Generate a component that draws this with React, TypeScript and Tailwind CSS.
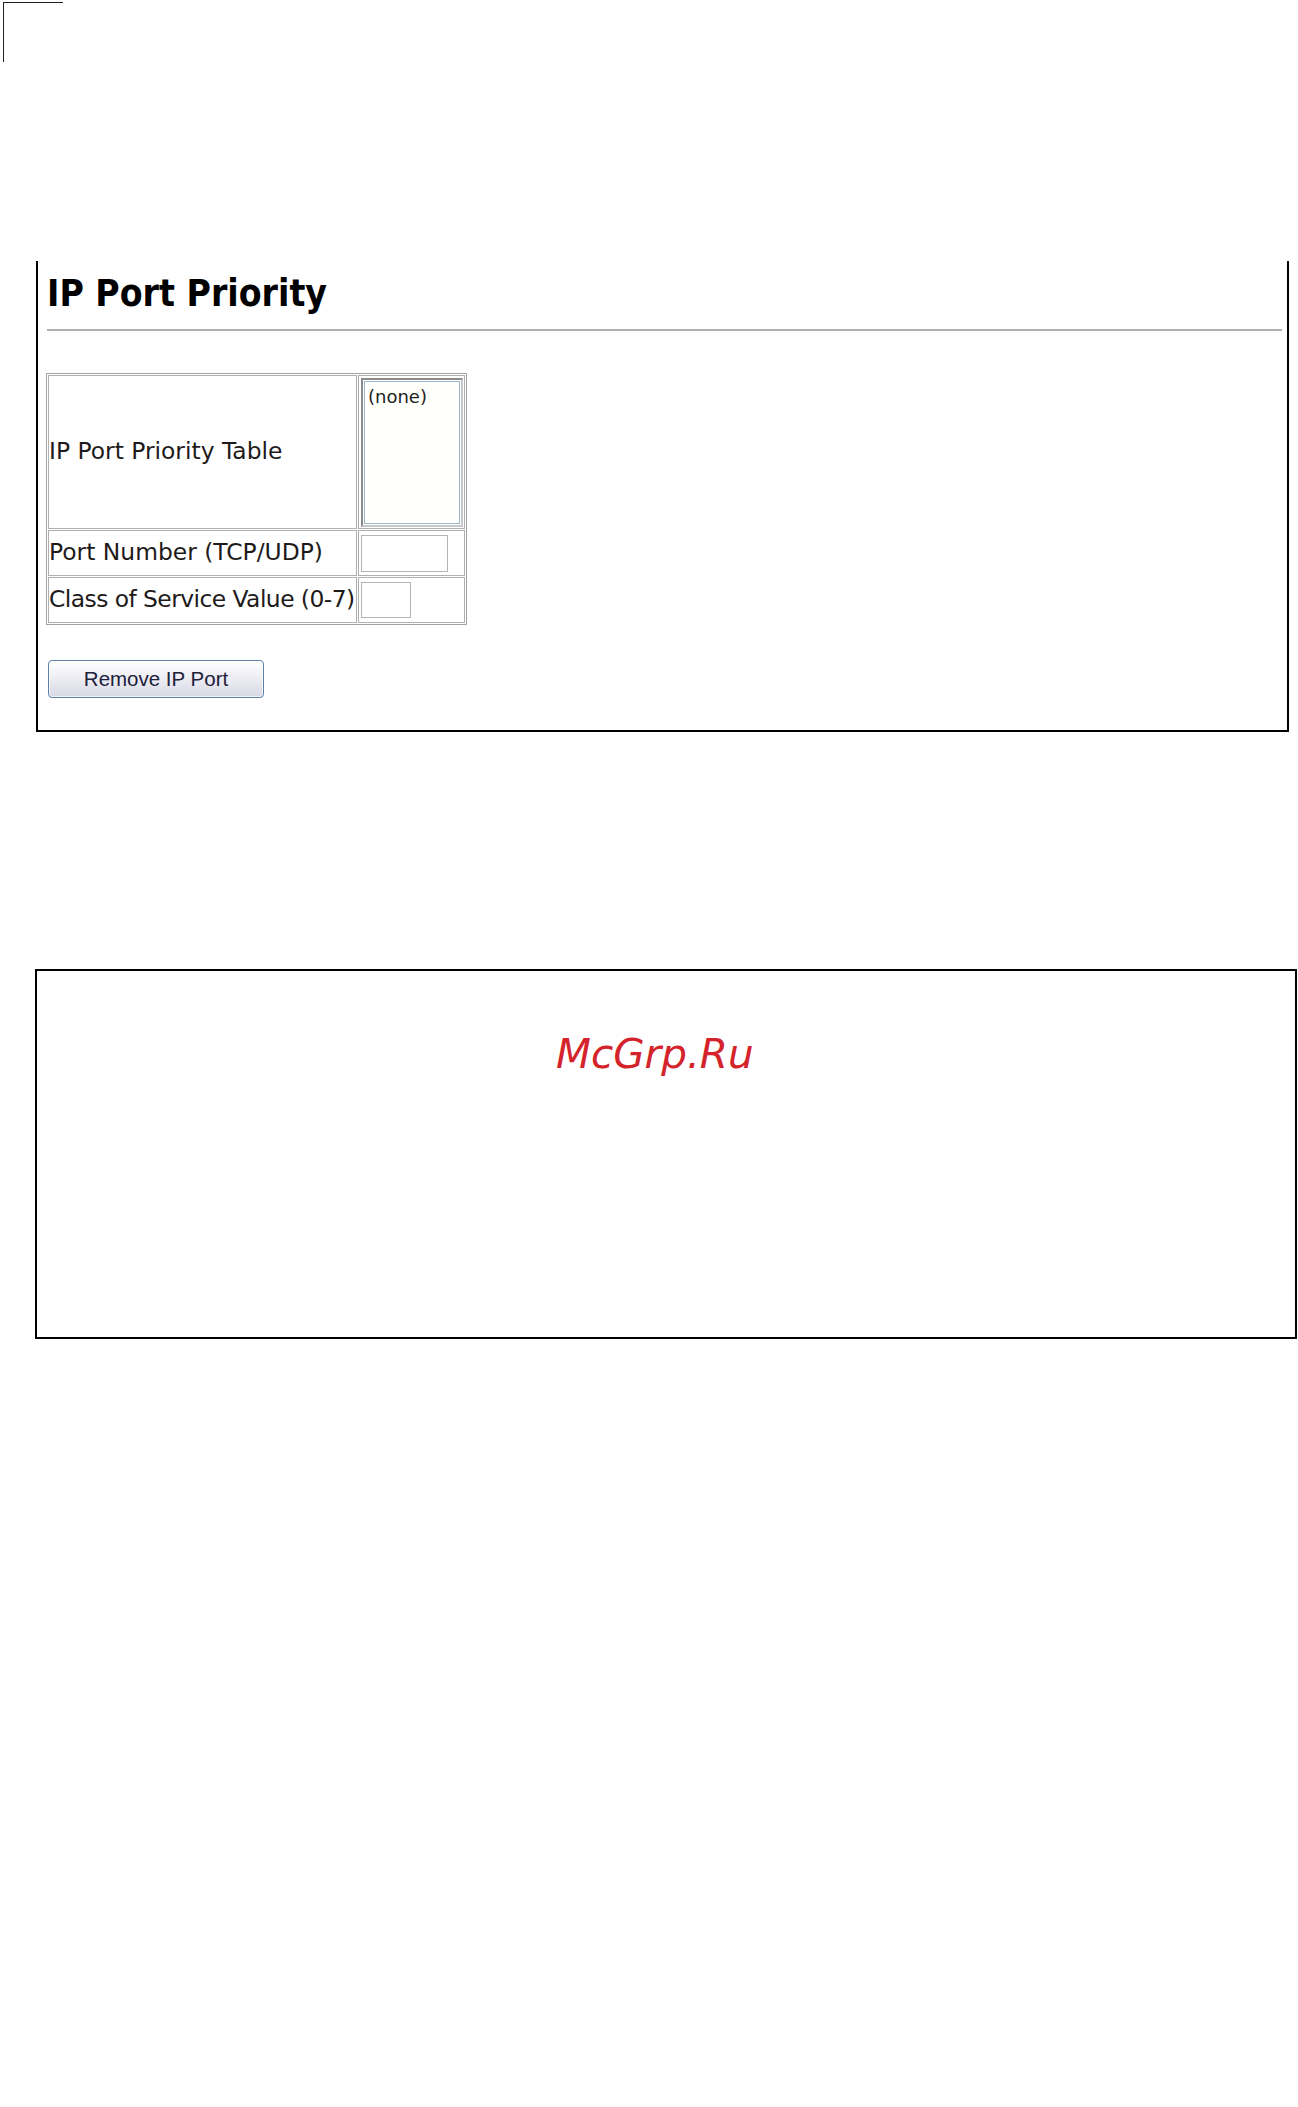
const labelFont = { fontFamily: '"DejaVu Sans", Verdana, sans-serif' }

export default function App() {
  return (
    <div className="w-[1298px] h-[2107px] bg-white overflow-hidden">
      {/* crop mark */}
      <div className="mt-[2px] ml-[3px] w-[60px] h-[60px] border-t border-l border-[#222]" />

      {/* IP Port Priority panel */}
      <div className="mt-[199px] ml-[36px] w-[1253px] h-[471px] border-l-2 border-r-2 border-b-2 border-black flex flex-col">
        <h1
          className="mt-[13px] ml-[9px] h-[40px] leading-[40px] text-[37px] font-bold text-black whitespace-nowrap"
          style={{ fontFamily: '"DejaVu Sans Condensed", "DejaVu Sans", Verdana, sans-serif' }}
        >
          IP Port Priority
        </h1>
        <div className="mt-[15px] ml-[9px] mr-[5px] h-[2px] bg-[#b0b0b0]" />

        {/* settings table */}
        <div className="mt-[42px] ml-[8px] w-[421px] border border-[#a4a4a4] p-[1px]" style={labelFont}>
          <div className="grid grid-cols-[309px_107px] grid-rows-[154px_46px_46px] gap-[1px] text-[23.4px] text-[#1e1a1a]">
            <div className="border border-[#b0b0b0] flex items-center whitespace-nowrap">
              IP Port Priority Table
            </div>
            <div className="border border-[#b0b0b0] pt-[2px] pl-[2px]">
              <div className="w-[102px] h-[149px] border-2 border-t-[#8a8a8a] border-l-[#8a8a8a] border-r-[#c8c8c8] border-b-[#c8c8c8] bg-[#fffffc] p-[1px]">
                <div className="w-full h-full border border-[#9db4cf] text-[18px] leading-[22px] pl-[3px] pt-[4px] text-[#222]">
                  (none)
                </div>
              </div>
            </div>

            <div className="border border-[#b0b0b0] flex items-center whitespace-nowrap">
              Port Number (TCP/UDP)
            </div>
            <div className="border border-[#b0b0b0] flex items-center pl-[2px]">
              <div className="w-[87px] h-[37px] border border-[#b4b4b4] bg-white" />
            </div>

            <div className="border border-[#b0b0b0] flex items-center whitespace-nowrap tracking-[-0.55px]">
              Class of Service Value (0-7)
            </div>
            <div className="border border-[#b0b0b0] flex items-center pl-[2px]">
              <div className="w-[50px] h-[36px] border border-[#b4b4b4] bg-white" />
            </div>
          </div>
        </div>

        <button
          className="mt-[35px] ml-[10px] w-[216px] h-[38px] rounded-[4px] border border-[#5d80aa] bg-gradient-to-b from-white to-[#d9d9e6] text-[20.5px] leading-[34px] text-[#20203a] shadow-[inset_0_0_0_1px_rgba(255,255,255,0.7)]"
          style={{ fontFamily: '"Liberation Sans", Arial, sans-serif' }}
        >
          Remove IP Port
        </button>
      </div>

      {/* second frame */}
      <div className="mt-[237px] ml-[35px] w-[1262px] h-[370px] border-2 border-black">
        <div
          className="mt-[63px] ml-[519px] text-[40.5px] leading-[40px] italic text-[#d4232b] whitespace-nowrap"
          style={{ fontFamily: '"DejaVu Sans", Verdana, sans-serif' }}
        >
          McGrp.Ru
        </div>
      </div>
    </div>
  )
}
